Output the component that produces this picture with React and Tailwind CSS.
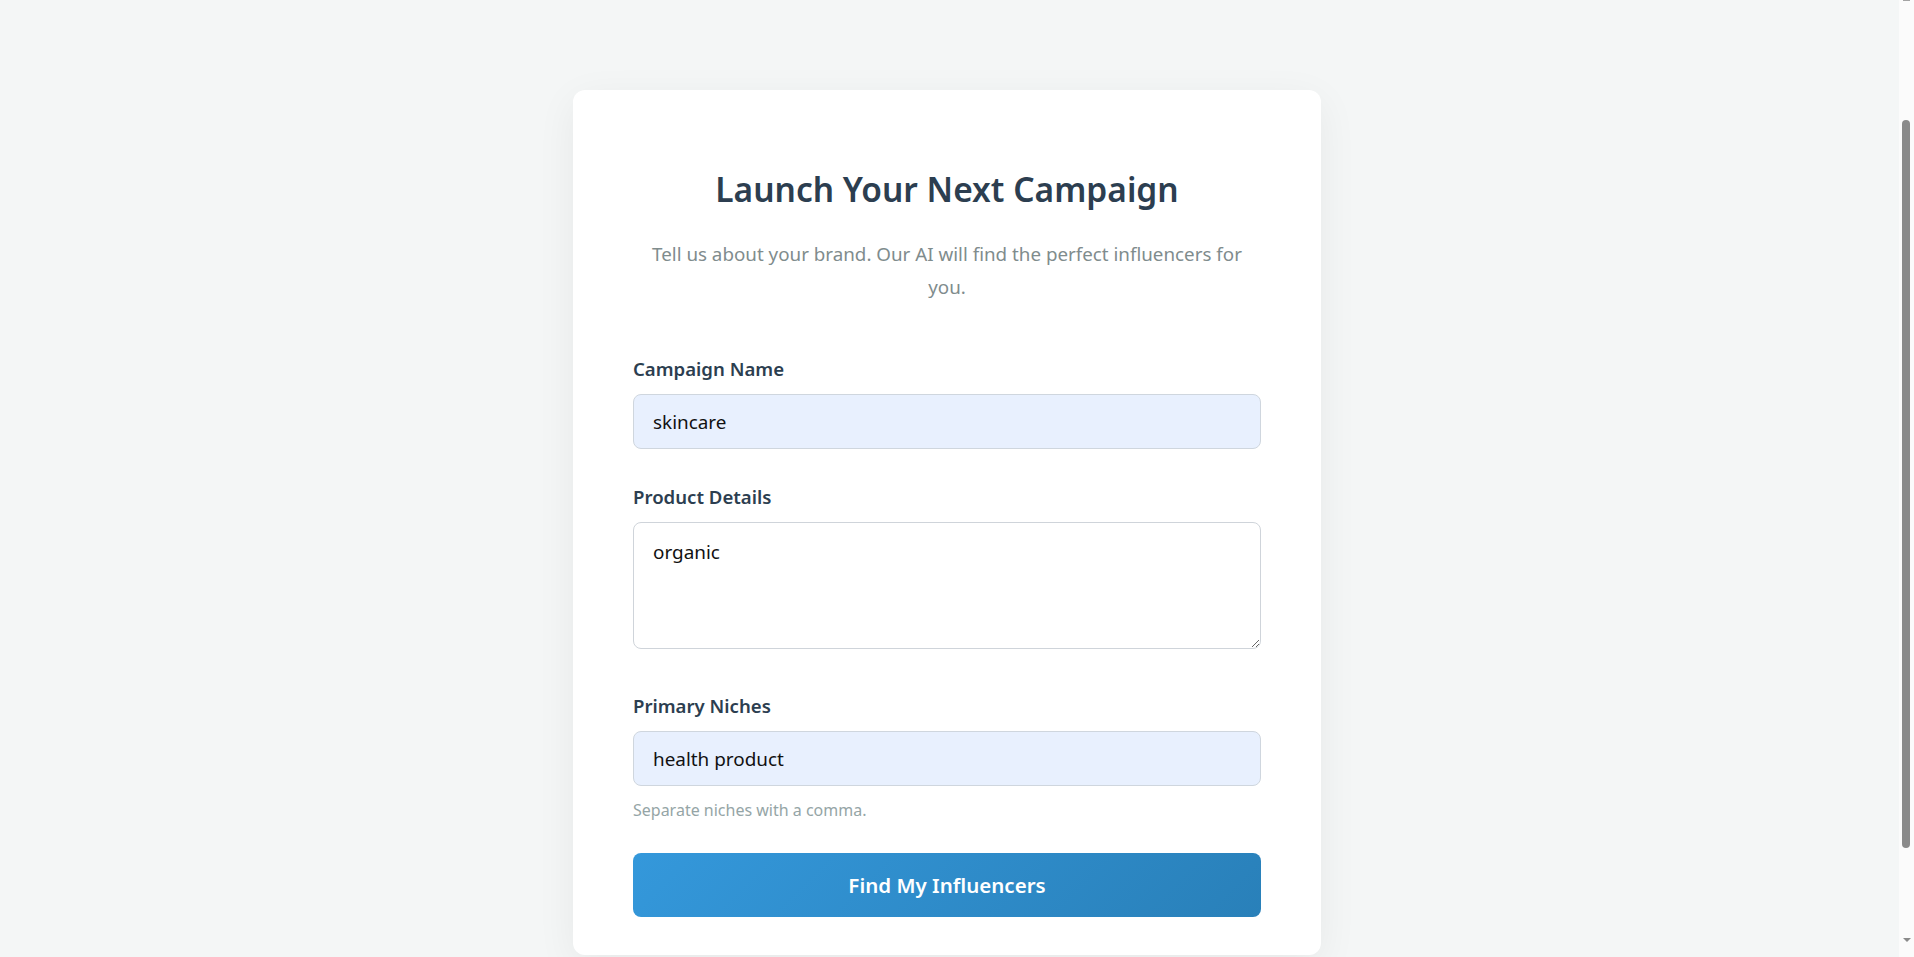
function Field({ label, children, className }) {
  return (
    <div className={className}>
      <label className="block text-[18.6px] leading-[26px] font-semibold text-[#2c3e50] mb-[12px]">{label}</label>
      {children}
    </div>
  );
}

function FakeScrollbar() {
  return (
    <div className="relative w-[15px] h-full shrink-0 bg-[#fbfbfb]">
      <div className="absolute top-0 left-[4px] w-[7px] h-[1px] bg-[#a3a3a3]" />
      <div className="absolute top-[120px] left-[3px] w-[8px] h-[728px] rounded-full bg-[#8a8a8a]" />
      <div className="absolute bottom-[15px] left-[4px] w-0 h-0 border-l-[4px] border-r-[4px] border-t-[4px] border-l-transparent border-r-transparent border-t-[#8a8a8a]" />
    </div>
  );
}

export default function App() {
  return (
    <div className="flex h-screen overflow-hidden bg-[#f4f6f6] font-['Noto_Sans',sans-serif]">
      <main className="flex-1 overflow-hidden pt-[90px] pr-[5px]">
        <div className="w-[748px] mx-auto bg-white rounded-[12px] shadow-[0_10px_40px_rgba(0,0,0,0.06)] px-[60px] pt-[80px] pb-[38px]">
          <h2 className="text-center text-[33.5px] leading-[38px] font-semibold text-[#2c3e50]">
            Launch Your Next Campaign
          </h2>
          <p className="mt-[30px] text-center text-[18.8px] leading-[33px] text-[#7f8c8d]">
            Tell us about your brand. Our AI will find the perfect influencers for
            <br />
            you.
          </p>

          <form className="mt-[52px]" onSubmit={(e) => e.preventDefault()}>
            <Field label="Campaign Name">
              <input
                type="text"
                defaultValue="skincare"
                className="block w-full h-[55px] px-[19px] rounded-[8px] border border-[#cfd6de] bg-[#e8f0fe] text-[18.9px] text-[#111] outline-none"
              />
            </Field>

            <Field label="Product Details" className="mt-[35px]">
              <textarea
                defaultValue="organic"
                className="block w-full h-[127px] px-[19px] pt-[16px] leading-[26px] rounded-[8px] border border-[#cfd4da] bg-white text-[18.9px] text-[#111] outline-none resize-y"
              />
            </Field>

            <Field label="Primary Niches" className="mt-[44px]">
              <input
                type="text"
                defaultValue="health product"
                className="block w-full h-[55px] px-[19px] rounded-[8px] border border-[#cfd6de] bg-[#e8f0fe] text-[18.9px] text-[#111] outline-none"
              />
              <p className="mt-[13px] text-[16px] leading-[22px] text-[#95a5a6]">Separate niches with a comma.</p>
            </Field>

            <button
              type="submit"
              className="mt-[32px] w-full h-[64px] rounded-[8px] bg-linear-135 from-[#3498db] to-[#2980b9] text-white text-[20.5px] font-semibold"
            >
              Find My Influencers
            </button>
          </form>
        </div>
      </main>
      <FakeScrollbar />
    </div>
  );
}
